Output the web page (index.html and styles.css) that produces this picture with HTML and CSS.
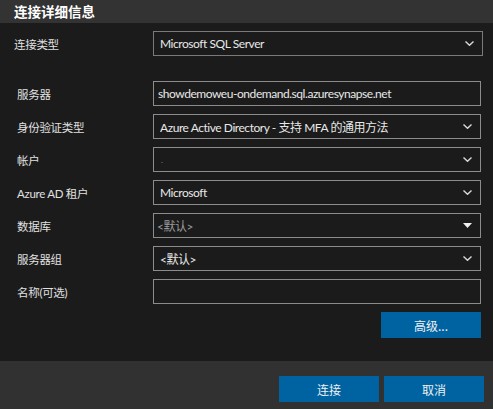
FILE: index.html
```html
<!DOCTYPE html>
<html lang="zh">
<head>
<meta charset="utf-8">
<title>连接详细信息</title>
<link rel="stylesheet" href="styles.css">
</head>
<body>
<div class="dialog">
  <div class="header">连接详细信息</div>
  <div class="form">
    <div class="row row-first">
      <label class="label label-first">连接类型</label>
      <div class="field select wide"><span class="value">Microsoft SQL Server</span><svg class="chev" width="9" height="5" viewBox="0 0 9 5"><path d="M0.5 0.5 L4.5 4.3 L8.5 0.5" fill="none" stroke="#d8d8d8" stroke-width="1.4"/></svg></div>
    </div>
    <div class="row">
      <label class="label">服务器</label>
      <div class="field input"><span class="value">showdemoweu-ondemand.sql.azuresynapse.net</span></div>
    </div>
    <div class="row">
      <label class="label">身份验证类型</label>
      <div class="field select"><span class="value">Azure Active Directory - 支持 MFA 的通用方法</span><svg class="chev" width="9" height="5" viewBox="0 0 9 5"><path d="M0.5 0.5 L4.5 4.3 L8.5 0.5" fill="none" stroke="#d8d8d8" stroke-width="1.4"/></svg></div>
    </div>
    <div class="row">
      <label class="label">帐户</label>
      <div class="field select"><span class="value dot">.</span><svg class="chev" width="9" height="5" viewBox="0 0 9 5"><path d="M0.5 0.5 L4.5 4.3 L8.5 0.5" fill="none" stroke="#d8d8d8" stroke-width="1.4"/></svg></div>
    </div>
    <div class="row">
      <label class="label">Azure AD 租户</label>
      <div class="field select"><span class="value">Microsoft</span><svg class="chev" width="9" height="5" viewBox="0 0 9 5"><path d="M0.5 0.5 L4.5 4.3 L8.5 0.5" fill="none" stroke="#d8d8d8" stroke-width="1.4"/></svg></div>
    </div>
    <div class="row">
      <label class="label">数据库</label>
      <div class="field select combo"><span class="value placeholder">&lt;默认&gt;</span><svg class="tri" width="9" height="5" viewBox="0 0 9 5"><path d="M0 0 H9 L4.5 5 Z" fill="#f0f0f0"/></svg></div>
    </div>
    <div class="row">
      <label class="label">服务器组</label>
      <div class="field select"><span class="value">&lt;默认&gt;</span><svg class="chev" width="9" height="5" viewBox="0 0 9 5"><path d="M0.5 0.5 L4.5 4.3 L8.5 0.5" fill="none" stroke="#d8d8d8" stroke-width="1.4"/></svg></div>
    </div>
    <div class="row">
      <label class="label">名称(可选)</label>
      <div class="field input"></div>
    </div>
    <div class="actions">
      <button class="btn">高级...</button>
    </div>
  </div>
  <div class="footer">
    <button class="btn">连接</button>
    <button class="btn">取消</button>
  </div>
</div>
</body>
</html>
```

FILE: styles.css
```css
html, body {
  margin: 0;
  padding: 0;
  background: #1b1b1b;
}
body {
  font-family: Lato, "Noto Sans CJK SC", sans-serif;
  font-size: 12px;
  color: #e6e6e6;
  width: 493px;
  height: 409px;
  overflow: hidden;
}
.dialog {
  display: flex;
  flex-direction: column;
  height: 409px;
}
.header {
  height: 23px;
  background: #333333;
  color: #ffffff;
  font-weight: bold;
  font-size: 13.5px;
  line-height: 23px;
  padding-left: 14px;
  font-family: "Noto Sans CJK SC", sans-serif;
}
.form {
  flex: 1;
  padding-top: 8px;
  display: flex;
  flex-direction: column;
  gap: 8px;
}
.row {
  display: flex;
  align-items: center;
  height: 25px;
}
.row-first {
  margin-bottom: 17px;
}
.label {
  width: 136px;
  padding-left: 17px;
  flex: none;
  color: #e0e0e0;
  font-size: 11.5px;
  letter-spacing: -0.3px;
  font-family: Lato, "Noto Sans CJK SC", sans-serif;
}
.label-first {
  padding-left: 14px;
  width: 139px;
}
.field {
  box-sizing: border-box;
  width: 328px;
  height: 25px;
  border: 1px solid #8c8c8c;
  display: flex;
  align-items: center;
  padding-left: 6px;
  padding-right: 8px;
  background: #1b1b1b;
}
.field.wide {
  width: 330px;
  border-color: #7a7a7a;
}
.field.input {
  padding-left: 4px;
}
.field.combo {
  padding-left: 3px;
}
.value {
  flex: 1;
  white-space: nowrap;
  overflow: hidden;
  color: #e8e8e8;
  letter-spacing: -0.45px;
}
.value.placeholder {
  color: #9a9a9a;
}
.value.dot {
  color: #888;
  font-size: 8px;
  padding-left: 1px;
}
.chev, .tri {
  flex: none;
  display: block;
}
.actions {
  display: flex;
  justify-content: flex-end;
  padding-right: 12px;
}
.btn {
  width: 100px;
  height: 26px;
  border: none;
  background: #0063a1;
  color: #f0f0f0;
  font-family: "Noto Sans CJK SC", sans-serif;
  font-size: 12px;
  padding: 0;
  margin: 0;
}
.footer {
  height: 48px;
  background: #313131;
  display: flex;
  justify-content: flex-end;
  gap: 5px;
  padding-top: 15px;
  padding-right: 9px;
  box-sizing: border-box;
}
```
